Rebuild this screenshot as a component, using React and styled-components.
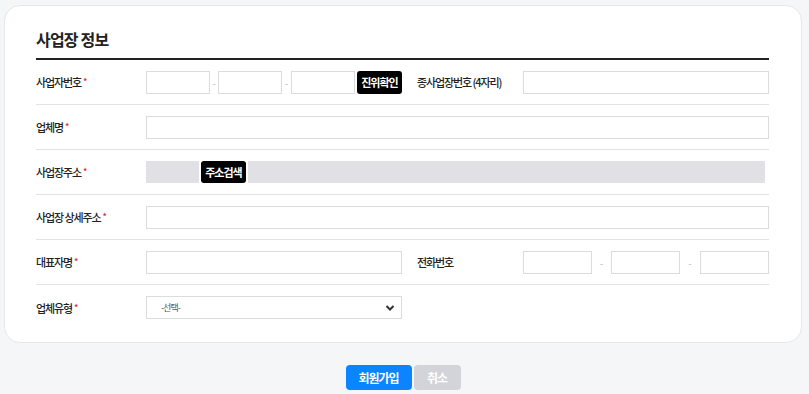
import React from 'react'
import styled, { createGlobalStyle } from 'styled-components'

const GlobalStyle = createGlobalStyle`
    body {
        margin: 0;
        background: #f5f6f8;
        font-family: "Noto Sans CJK KR", "Noto Sans", sans-serif;
        color: #222;
    }
`

const Page = styled.div`
    padding: 5px 7px 4px 4px;
`

const Card = styled.div`
    background: #fff;
    border: 1px solid #e6e7ea;
    border-radius: 16px;
    padding: 22px 32px 12px 31px;
`

const Title = styled.h2`
    margin: 0;
    font-size: 16px;
    line-height: 22px;
    font-weight: 700;
    letter-spacing: -0.8px;
    padding-bottom: 8px;
    border-bottom: 2px solid #222;
`

const Row = styled.div`
    display: grid;
    grid-template-columns: 110px 256px 121px 1fr;
    align-items: center;
    height: 45px;
    box-sizing: border-box;
    border-bottom: ${p => (p.$last ? 'none' : '1px solid #e3e3e3')};
`

const Label = styled.div`
    font-size: 11px;
    font-weight: 500;
    letter-spacing: -1.1px;
    color: #222;
    white-space: nowrap;
    padding-left: ${p => p.$indent || 0}px;
`

const Star = styled.span`
    color: #e8242c;
    font-size: 9px;
    margin-left: 2px;
    vertical-align: 2px;
`

const Field = styled.div`
    display: flex;
    align-items: center;
    grid-column: ${p => p.$span || 'auto'};
`

const Input = styled.input`
    box-sizing: border-box;
    height: 23px;
    width: ${p => p.$w || '100%'};
    flex: ${p => (p.$w ? 'none' : 1)};
    border: 1px solid #dcdcdc;
    background: #fff;
    outline: none;
    padding: 0 8px;
    font: inherit;
`

const Dash = styled.span`
    color: #bbb;
    font-size: 10px;
    width: ${p => p.$w || 8}px;
    text-align: center;
`

const BlackBtn = styled.button`
    height: ${p => p.$h || 23}px;
    width: 45px;
    flex: none;
    border: none;
    border-radius: 3px;
    background: #000;
    color: #fff;
    font-family: inherit;
    font-size: 11px;
    font-weight: 700;
    letter-spacing: -1px;
    padding: 0;
    margin-left: ${p => (p.$flush ? 0 : 2)}px;
`

const GrayBox = styled.div`
    height: 22px;
    background: #e1e1e5;
    width: ${p => p.$w || 'auto'};
    flex: ${p => (p.$w ? 'none' : 1)};
`

const AddressField = styled(Field)`
    gap: 2px;
    padding-right: 4px;
`

const Select = styled.div`
    box-sizing: border-box;
    height: 23px;
    width: 256px;
    border: 1px solid #dcdcdc;
    display: flex;
    align-items: center;
    justify-content: space-between;
    padding: 0 6px 0 14px;
    font-size: 9px;
    color: #555;
    letter-spacing: -1px;
`

const Footer = styled.div`
    display: flex;
    justify-content: center;
    gap: 2px;
    margin-top: 22px;
`

const ActionBtn = styled.button`
    height: 25px;
    width: ${p => p.$w}px;
    border: none;
    border-radius: 4px;
    background: ${p => (p.$primary ? '#0a84ff' : '#d2d4d9')};
    color: #fff;
    font-family: inherit;
    font-size: 12px;
    font-weight: 700;
    letter-spacing: -1px;
`

const Chevron = () => (
    <svg width="10" height="8" viewBox="0 0 10 8">
        <path d="M1.5 2 L5 5.5 L8.5 2" fill="none" stroke="#333" strokeWidth="2" />
    </svg>
)

const Req = ({ children }) => (
    <Label>{children}<Star>*</Star></Label>
)

const App = () => {
    return (
        <Page>
            <GlobalStyle />
            <Card>
                <Title>사업장 정보</Title>
                <Row>
                    <Req>사업자번호</Req>
                    <Field>
                        <Input $w="64px" />
                        <Dash>-</Dash>
                        <Input $w="64px" />
                        <Dash $w={9}>-</Dash>
                        <Input $w="64px" />
                        <BlackBtn>진위확인</BlackBtn>
                    </Field>
                    <Label $indent={15}>종사업장번호 (4자리)</Label>
                    <Field><Input /></Field>
                </Row>
                <Row>
                    <Req>업체명</Req>
                    <Field $span="2 / 5"><Input /></Field>
                </Row>
                <Row>
                    <Req>사업장주소</Req>
                    <AddressField $span="2 / 5">
                        <GrayBox $w="53px" />
                        <BlackBtn $h={22} $flush>주소검색</BlackBtn>
                        <GrayBox />
                    </AddressField>
                </Row>
                <Row>
                    <Req>사업장 상세주소</Req>
                    <Field $span="2 / 5"><Input /></Field>
                </Row>
                <Row>
                    <Req>대표자명</Req>
                    <Field><Input /></Field>
                    <Label $indent={15}>전화번호</Label>
                    <Field>
                        <Input $w="69px" />
                        <Dash $w={19}>-</Dash>
                        <Input $w="69px" />
                        <Dash $w={20}>-</Dash>
                        <Input $w="69px" />
                    </Field>
                </Row>
                <Row $last>
                    <Req>업체유형</Req>
                    <Field>
                        <Select>
                            <span>-선택-</span>
                            <Chevron />
                        </Select>
                    </Field>
                </Row>
            </Card>
            <Footer>
                <ActionBtn $primary $w={66}>회원가입</ActionBtn>
                <ActionBtn $w={47}>취소</ActionBtn>
            </Footer>
        </Page>
    )
}

export default App
